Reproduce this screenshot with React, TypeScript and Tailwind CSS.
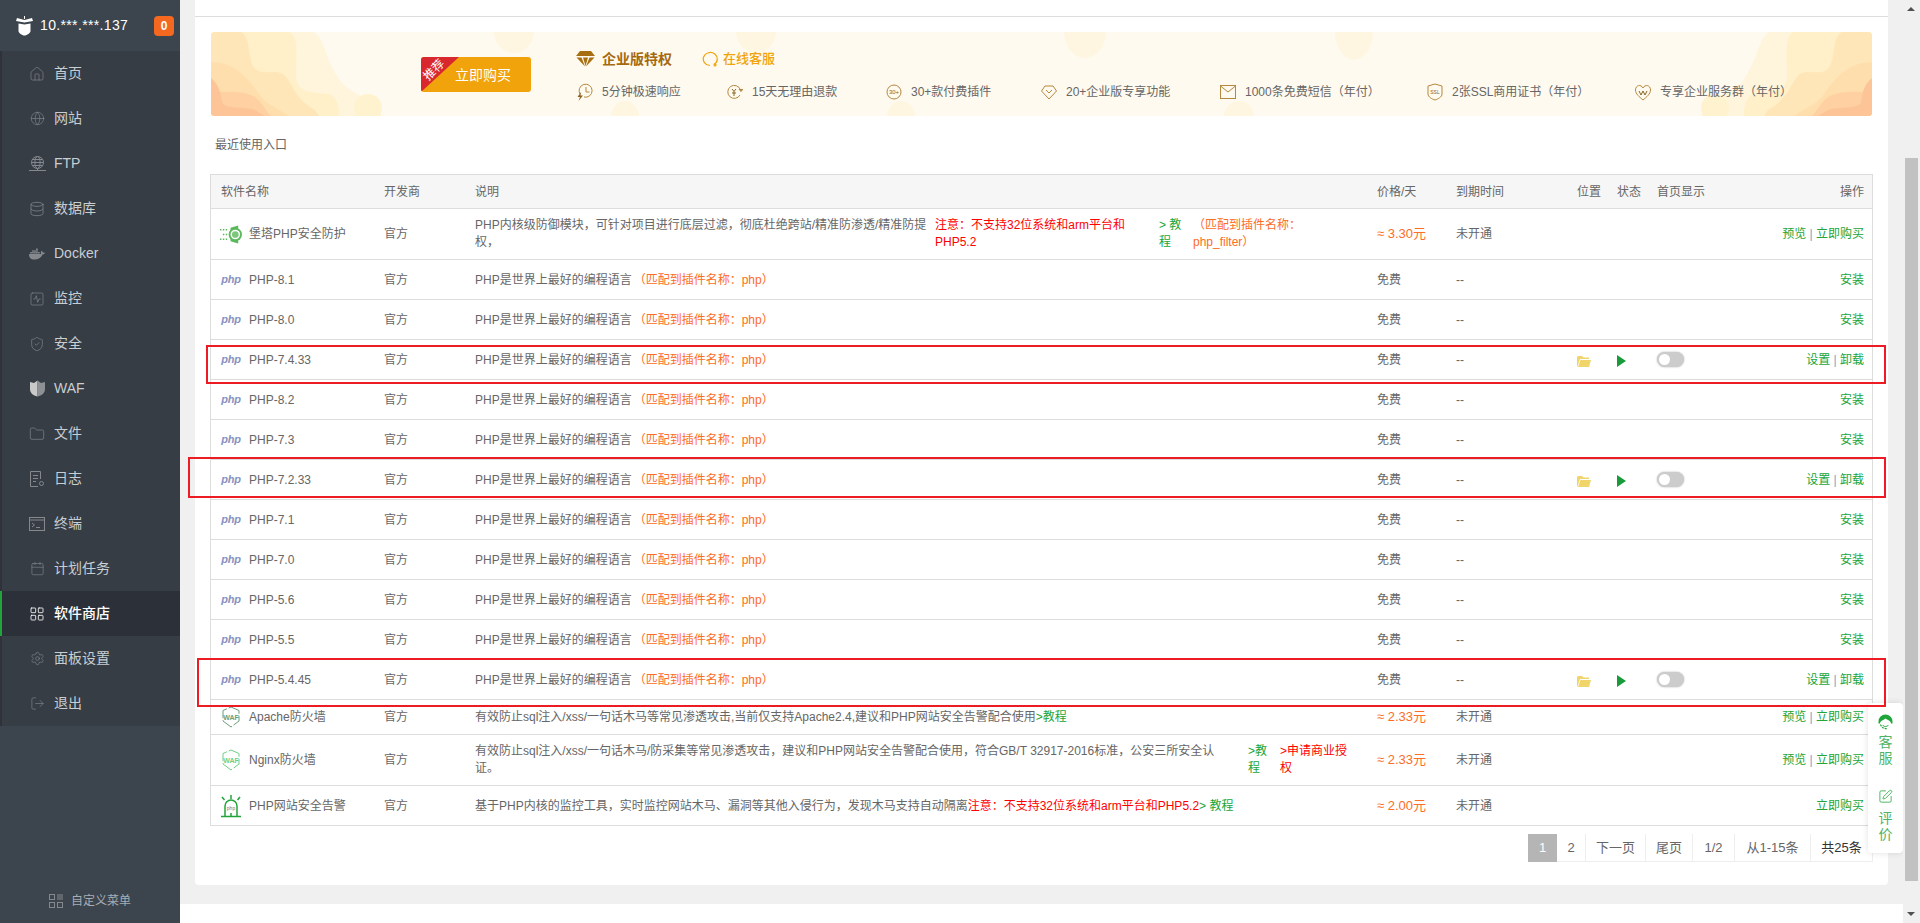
import type { ReactNode } from "react";
import {
  Calendar,
  Database,
  Folder,
  Globe,
  House,
  LayoutGrid,
  LogOut,
  Settings,
  ShieldCheck,
  SquareActivity,
  SquarePen,
} from "lucide-react";
import { FaDocker } from "react-icons/fa";

function LogoIcon() {
  return (
    <svg width="19" height="20" viewBox="0 0 19 20" fill="#fff">
      <path d="M2 2 L9.5 4 L17 2 L18 5 L9.5 6.5 L1 5 Z" />
      <path d="M9 0h1v3H9z" />
      <path d="M3.5 7.5 L9.5 8.5 L15.5 7.5 V15 C15.5 17 12 19.5 9.5 19.5 C7 19.5 3.5 17 3.5 15 Z" />
    </svg>
  );
}

function FtpIcon() {
  return (
    <svg width="17" height="16" viewBox="0 0 17 16" fill="none" stroke="currentColor" strokeWidth="1">
      <circle cx="8.5" cy="6.5" r="6" />
      <ellipse cx="8.5" cy="6.5" rx="2.6" ry="6" />
      <path d="M2.5 6.5h12M3.5 3.5h10M3.5 9.5h10M8.5 12.5v2M0 14.5h17" />
    </svg>
  );
}

function WafNavIcon() {
  return (
    <svg width="15" height="17" viewBox="0 0 15 17">
      <path d="M0 2 L4 3 L7.5 0.5 V16.5 C3 15.5 0 13 0 9 Z" fill="#c9c9c9" />
      <path d="M15 2 L11 3 L7.5 0.5 V16.5 C12 15.5 15 13 15 9 Z" fill="#8d9094" />
    </svg>
  );
}

function LogNavIcon() {
  return (
    <svg width="15" height="16" viewBox="0 0 15 16" fill="none" stroke="currentColor" strokeWidth="1">
      <path d="M10.5 8V0.5H0.5v15H8M3 4.5h5M3 7.5h5M3 10.5h3" />
      <circle cx="11.5" cy="12.5" r="2" />
    </svg>
  );
}

function TerminalNavIcon() {
  return (
    <svg width="16" height="14" viewBox="0 0 16 14" fill="none" stroke="currentColor" strokeWidth="1">
      <rect x="0.5" y="0.5" width="15" height="13" />
      <path d="M0.5 3h15M3 6l2.5 2L3 10M7 10.5h4" />
    </svg>
  );
}

type NavItem = { label: string; icon: ReactNode; active?: boolean };

const NAV_ITEMS: NavItem[] = [
  { label: "首页", icon: <House size={16} strokeWidth={1} /> },
  { label: "网站", icon: <Globe size={15} strokeWidth={1} /> },
  { label: "FTP", icon: <FtpIcon /> },
  { label: "数据库", icon: <Database size={16} strokeWidth={1.1} /> },
  { label: "Docker", icon: <FaDocker size={16} /> },
  { label: "监控", icon: <SquareActivity size={16} strokeWidth={1} /> },
  { label: "安全", icon: <ShieldCheck size={16} strokeWidth={1} /> },
  { label: "WAF", icon: <WafNavIcon /> },
  { label: "文件", icon: <Folder size={16} strokeWidth={1} /> },
  { label: "日志", icon: <LogNavIcon /> },
  { label: "终端", icon: <TerminalNavIcon /> },
  { label: "计划任务", icon: <Calendar size={15} strokeWidth={1} /> },
  { label: "软件商店", icon: <LayoutGrid size={16} strokeWidth={1.25} />, active: true },
  { label: "面板设置", icon: <Settings size={15} strokeWidth={1} /> },
  { label: "退出", icon: <LogOut size={15} strokeWidth={1} /> },
];

function Sidebar() {
  return (
    <aside className="flex w-[180px] shrink-0 flex-col bg-[#3c444d]">
      <div className="flex h-[51px] items-center pl-[15px]">
        <LogoIcon />
        <span className="ml-[6px] w-[114px] text-[14px] tracking-[0.35px] text-white">10.***.***.137</span>
        <span className="flex h-5 w-5 items-center justify-center rounded-[4px] bg-[#f5681f] text-[12px] font-bold text-white">
          0
        </span>
      </div>
      <nav className="border-l-2 border-[#2f3339] bg-[#363d45]">
        {NAV_ITEMS.map((item) => (
          <div
            key={item.label}
            className={`-ml-[2px] flex h-[45px] items-center border-l-2 text-[14px] ${
              item.active
                ? "border-[#20a53a] bg-[#2c3038] font-medium text-white"
                : "border-transparent text-[#c9ced3]"
            }`}
          >
            <span
              className={`flex w-[52px] justify-center pl-[18px] ${
                item.active ? "text-white" : "text-[#85898e]"
              }`}
            >
              {item.icon}
            </span>
            <span>{item.label}</span>
          </div>
        ))}
      </nav>
      <div className="mt-auto flex h-[44px] items-center justify-center gap-2 text-[12px] text-[#a7adb3]">
        <svg width="14" height="14" viewBox="0 0 14 14" fill="none" stroke="#85898e">
          <rect x="0.5" y="0.5" width="5" height="5" />
          <rect x="0.5" y="8.5" width="5" height="5" />
          <rect x="8.5" y="8.5" width="5" height="5" />
          <path d="M8 1h6M8 3h6M8 5h6" />
        </svg>
        <span>自定义菜单</span>
      </div>
    </aside>
  );
}

const WAVE_LAYERS = [
  { fill: "#fff5dc", d: "M0 0H103C115 8 112 24 130 50C140 62 160 66 170 78V84H0Z" },
  { fill: "#fff0c9", d: "M0 0H78C88 4 85 20 85 45C87 62 100 60 118 62C128 66 128 78 128 84H0Z" },
  { fill: "#ffe6b8", d: "M0 0H30C40 6 36 20 42 34C50 46 62 36 72 42C82 50 82 66 104 78L108 84H0Z" },
  { fill: "#ffdeae", d: "M0 30C22 30 36 44 48 62C54 72 70 78 78 84H0Z" },
  { fill: "#ffd0a2", d: "M0 60C14 60 30 58 42 64C50 68 54 78 60 84H0Z" },
  { fill: "#fdc498", d: "M0 46C8 52 10 62 11 70C14 78 34 74 44 78L54 84H0Z" },
];

function BannerWave({ mirrored }: { mirrored?: boolean }) {
  return (
    <svg
      width="180"
      height="84"
      viewBox="0 0 180 84"
      className={`absolute top-0 ${mirrored ? "right-0 -scale-x-100" : "left-0"}`}
    >
      {WAVE_LAYERS.map((layer) => (
        <path key={layer.fill} d={layer.d} fill={layer.fill} />
      ))}
      <circle cx="157" cy="76" r="14" fill="#fff2cf" />
    </svg>
  );
}

function BannerSpots() {
  return (
    <svg width="1661" height="84" viewBox="0 0 1661 84" className="absolute left-0 top-0" fill="#fff6e2">
      <ellipse cx="303" cy="0" rx="20" ry="21" />
      <ellipse cx="545" cy="0" rx="20" ry="21" />
      <ellipse cx="874" cy="0" rx="21" ry="26" />
      <ellipse cx="1143" cy="0" rx="19" ry="28" />
      <ellipse cx="414" cy="84" rx="14" ry="15" />
      <ellipse cx="690" cy="84" rx="14" ry="15" />
      <ellipse cx="1028" cy="84" rx="15" ry="15" />
    </svg>
  );
}

const GOLD = "#b5873f";

function FeatureSvg({ children }: { children: ReactNode }) {
  return (
    <svg width="16" height="18" viewBox="0 0 16 18" fill="none" stroke={GOLD} strokeWidth="1">
      {children}
    </svg>
  );
}

const FEATURES: { text: string; width: string; icon: ReactNode }[] = [
  {
    text: "5分钟极速响应",
    width: "w-[150px]",
    icon: (
      <FeatureSvg>
        <path d="M3 11A6.5 6.5 0 1 1 7 14" />
        <path d="M9 4v5h3.5" />
        <path d="M4 9L0.5 14H3L1.5 18L6 12.5H3.5Z" fill="#8a6420" stroke="none" />
      </FeatureSvg>
    ),
  },
  {
    text: "15天无理由退款",
    width: "w-[159px]",
    icon: (
      <FeatureSvg>
        <path d="M13.5 7A6.5 6.5 0 1 0 13 12" />
        <path d="M12 6l2 2.5L16 6" fill={GOLD} />
        <path d="M5 6l2 2.5L9 6M7 8.5V13M5 10h4" stroke="#8a6420" />
      </FeatureSvg>
    ),
  },
  {
    text: "30+款付费插件",
    width: "w-[155px]",
    icon: (
      <FeatureSvg>
        <circle cx="8" cy="9" r="7" />
        <text x="8" y="11" textAnchor="middle" fontSize="6" fill="#8a6420" stroke="none">
          30+
        </text>
      </FeatureSvg>
    ),
  },
  {
    text: "20+企业版专享功能",
    width: "w-[179px]",
    icon: (
      <FeatureSvg>
        <path d="M4 3h8l3.5 5L8 16 0.5 8Z" />
        <path d="M5 7l3 3 3-3" />
      </FeatureSvg>
    ),
  },
  {
    text: "1000条免费短信（年付）",
    width: "w-[207px]",
    icon: (
      <FeatureSvg>
        <rect x="0.5" y="2.5" width="15" height="13" />
        <path d="M0.5 3l7.5 6 7.5-6" />
      </FeatureSvg>
    ),
  },
  {
    text: "2张SSL商用证书（年付）",
    width: "w-[208px]",
    icon: (
      <FeatureSvg>
        <path d="M8 1l7 2v8c0 3-4 5-7 6-3-1-7-3-7-6V3Z" />
        <text x="8" y="11" textAnchor="middle" fontSize="5" fill="#8a6420" stroke="none">
          SSL
        </text>
      </FeatureSvg>
    ),
  },
  {
    text: "专享企业服务群（年付）",
    width: "w-auto",
    icon: (
      <FeatureSvg>
        <path d="M8 5C6 1 0.5 2 0.5 7c0 4 4 7 7.5 10 3.5-3 7.5-6 7.500-10 0-5-5.500-6-7.500-2Z" />
        <path d="M4 8l2 4 2-4 2 4 2-4" stroke="#8a6420" />
      </FeatureSvg>
    ),
  },
];

function Banner() {
  return (
    <div className="relative mx-4 mt-[15px] h-[84px] overflow-hidden rounded-[4px] bg-[#fffaef]">
      <BannerSpots />
      <BannerWave />
      <BannerWave mirrored />
      <div className="relative flex h-full pl-[210px] pt-[25px]">
        <div className="relative h-[35px] w-[110px] shrink-0 overflow-hidden rounded-[3px] bg-[#f0a30a] pl-[34px] text-[14px] leading-[36px] text-white">
          <div className="absolute left-0 top-0 h-[35px] w-[38px] bg-[#d9272e] [clip-path:polygon(0_0,100%_0,0_100%)]" />
          <span className="absolute left-0 top-[5px] w-[26px] -rotate-45 text-center text-[12px] leading-[16px]">
            推荐
          </span>
          <span className="relative">立即购买</span>
        </div>
        <div className="-mt-[25px] ml-[45px] flex flex-col pt-[16px]">
          <div className="flex h-[22px] items-center">
            <svg width="19" height="16" viewBox="0 0 19 16" fill="#a86f12">
              <path d="M4 0h11l4 5H0Z" />
              <path d="M0.500 6.500h5L9 15.500Z" />
              <path d="M7 6.500h5L9.500 15Z" />
              <path d="M13.500 6.500h5L10 15.500Z" />
            </svg>
            <span className="ml-[7px] text-[14px] font-bold text-[#a5690f]">企业版特权</span>
            <svg width="16" height="16" viewBox="0 0 16 16" fill="none" stroke="#f0a30a" strokeWidth="1.2" className="ml-[30px]">
              <path d="M12 13.500A7 6.500 0 1 0 8 14.500" />
              <circle cx="13" cy="14" r="1" />
            </svg>
            <span className="ml-[5px] text-[13px] font-medium text-[#f0a30a]">在线客服</span>
          </div>
          <div className="ml-[1px] mt-[12px] flex h-[20px] items-center whitespace-nowrap text-[12px] text-[#666]">
            {FEATURES.map((feature) => (
              <div key={feature.text} className={`flex shrink-0 items-center gap-[9px] ${feature.width}`}>
                {feature.icon}
                <span>{feature.text}</span>
              </div>
            ))}
          </div>
        </div>
      </div>
    </div>
  );
}

function PhpLogo() {
  return (
    <span className="w-[22px] text-center text-[11px] font-bold italic leading-none tracking-[-0.3px] text-[#8892bf]">
      php
    </span>
  );
}

function GuardIcon() {
  return (
    <svg width="23" height="19" viewBox="0 0 23 19">
      <path d="M11 2.500L19 0V19L11 16.500Z" fill="#5cb85c" />
      <circle cx="16" cy="9.500" r="7" fill="#5cb85c" />
      <circle cx="16" cy="9.500" r="5" fill="#fff" />
      <circle cx="16" cy="9.500" r="3.500" fill="#7cc77c" />
      <path d="M0 4.500h9M3 9.500h6M0 14.500h9" stroke="#5cb85c" strokeWidth="1.500" strokeDasharray="1.500 1.500" />
    </svg>
  );
}

function WafIcon({ color }: { color: string }) {
  return (
    <svg width="20" height="22" viewBox="0 0 20 22" fill="none" stroke={color} strokeWidth="1">
      <path d="M10 1L18 4.500V15L10 21L2 15V4.500Z" strokeDasharray="12 2" />
      <text x="10" y="13.500" textAnchor="middle" fontSize="7" fontWeight="bold" fill={color} stroke="none">
        WAF
      </text>
    </svg>
  );
}

function AlarmIcon() {
  return (
    <svg width="20" height="24" viewBox="0 0 20 24" fill="none" stroke="#20a53a" strokeWidth="1.500">
      <path d="M4 22V12A6 6 0 0 1 16 12V22M0 22.500H20M10 1V5M1 3L3.500 6M19 3L16.500 6M10 19V22" />
      <text x="10" y="16" textAnchor="middle" fontSize="5" fill="#777" stroke="none">
        php
      </text>
    </svg>
  );
}

const Tail = () => <span className="ml-[2px] text-[#fc6d26]">（匹配到插件名称：php）</span>;

const Green = ({ children }: { children: ReactNode }) => (
  <span className="text-[#20a53a]">{children}</span>
);

const Sep = () => <span className="text-[#6fa8c8]"> | </span>;

type Row = {
  icon: ReactNode;
  name: string;
  desc: ReactNode;
  price: string;
  paid?: boolean;
  expire: string;
  installed?: boolean;
  action: ReactNode;
  height: string;
};

function phpRow(name: string, installed?: boolean): Row {
  return {
    icon: <PhpLogo />,
    name,
    desc: (
      <>
        PHP是世界上最好的编程语言
        <Tail />
      </>
    ),
    price: "免费",
    expire: "--",
    installed,
    height: "h-[40px]",
    action: installed ? (
      <>
        <Green>设置</Green>
        <Sep />
        <Green>卸载</Green>
      </>
    ) : (
      <Green>安装</Green>
    ),
  };
}

const buyAction = (
  <>
    <Green>预览</Green>
    <Sep />
    <Green>立即购买</Green>
  </>
);

const ROWS: Row[] = [
  {
    icon: <GuardIcon />,
    name: "堡塔PHP安全防护",
    desc: (
      <div className="flex leading-[17px]">
        <div className="w-[460px] shrink-0">
          PHP内核级防御模块，可针对项目进行底层过滤，彻底杜绝跨站/精准防渗透/精准防提权，
        </div>
        <div className="w-[224px] shrink-0 pr-[26px] text-[#ff0000]">注意：不支持32位系统和arm平台和PHP5.2</div>
        <div className="w-[34px] shrink-0 pr-[4px] text-[#20a53a]">&gt; 教程</div>
        <div className="w-[112px] shrink-0 text-[#fc6d26]">（匹配到插件名称：php_filter）</div>
      </div>
    ),
    price: "≈ 3.30元",
    paid: true,
    expire: "未开通",
    action: buyAction,
    height: "h-[51px]",
  },
  phpRow("PHP-8.1"),
  phpRow("PHP-8.0"),
  phpRow("PHP-7.4.33", true),
  phpRow("PHP-8.2"),
  phpRow("PHP-7.3"),
  phpRow("PHP-7.2.33", true),
  phpRow("PHP-7.1"),
  phpRow("PHP-7.0"),
  phpRow("PHP-5.6"),
  phpRow("PHP-5.5"),
  phpRow("PHP-5.4.45", true),
  {
    icon: <WafIcon color="#6c9c78" />,
    name: "Apache防火墙",
    desc: (
      <>
        有效防止sql注入/xss/一句话木马等常见渗透攻击,当前仅支持Apache2.4,建议和PHP网站安全告警配合使用
        <Green>&gt;教程</Green>
      </>
    ),
    price: "≈ 2.33元",
    paid: true,
    expire: "未开通",
    action: buyAction,
    height: "h-[35px]",
  },
  {
    icon: <WafIcon color="#6fcf85" />,
    name: "Nginx防火墙",
    desc: (
      <div className="flex leading-[17px]">
        <div className="w-[772px] shrink-0 pr-[20px]">
          有效防止sql注入/xss/一句话木马/防采集等常见渗透攻击，建议和PHP网站安全告警配合使用，符合GB/T 32917-2016标准，公安三所安全认证。
        </div>
        <div className="ml-[1px] w-[32px] shrink-0 pr-[4px] text-[#20a53a]">&gt;教程</div>
        <div className="w-[74px] shrink-0 text-[#ff0000]">&gt;申请商业授权</div>
      </div>
    ),
    price: "≈ 2.33元",
    paid: true,
    expire: "未开通",
    action: buyAction,
    height: "h-[51px]",
  },
  {
    icon: <AlarmIcon />,
    name: "PHP网站安全告警",
    desc: (
      <>
        基于PHP内核的监控工具，实时监控网站木马、漏洞等其他入侵行为，发现木马支持自动隔离
        <span className="text-[#ff0000]">注意：不支持32位系统和arm平台和PHP5.2</span>
        <Green>&gt; 教程</Green>
      </>
    ),
    price: "≈ 2.00元",
    paid: true,
    expire: "未开通",
    action: <Green>立即购买</Green>,
    height: "h-[40px]",
  },
];

const HEAD_CELL = "whitespace-nowrap border-b border-[#ddd] px-[10px] text-left font-normal";
const BODY_CELL = "border-b border-[#ddd] px-[10px]";

function PluginTable() {
  return (
    <div className="mx-[15px] mt-[20px] border-x border-t border-[#ddd]">
      <table className="w-full table-fixed border-separate border-spacing-0 text-[12px] text-[#666]">
        <colgroup>
          <col className="w-[163px]" />
          <col className="w-[91px]" />
          <col className="w-[902px]" />
          <col className="w-[79px]" />
          <col className="w-[121px]" />
          <col className="w-[40px]" />
          <col className="w-[40px]" />
          <col className="w-[73px]" />
          <col />
        </colgroup>
        <thead>
          <tr className="bg-[#f6f6f6]">
            <th className={`${HEAD_CELL} h-[34px]`}>软件名称</th>
            <th className={HEAD_CELL}>开发商</th>
            <th className={HEAD_CELL}>说明</th>
            <th className={HEAD_CELL}>价格/天</th>
            <th className={HEAD_CELL}>到期时间</th>
            <th className={HEAD_CELL}>位置</th>
            <th className={HEAD_CELL}>状态</th>
            <th className={HEAD_CELL}>首页显示</th>
            <th className={`${HEAD_CELL} !pr-[8px] !text-right`}>操作</th>
          </tr>
        </thead>
        <tbody>
          {ROWS.map((row) => (
            <tr key={row.name}>
              <td className={`${BODY_CELL} ${row.height} !pl-[9px] whitespace-nowrap`}>
                <div className="flex items-center gap-[7px]">
                  <span className="flex w-[22px] shrink-0 justify-center">{row.icon}</span>
                  <span>{row.name}</span>
                </div>
              </td>
              <td className={BODY_CELL}>官方</td>
              <td className={`${BODY_CELL} whitespace-normal`}>{row.desc}</td>
              <td className={`${BODY_CELL} ${row.paid ? "text-[13px] text-[#fc6d26]" : ""}`}>{row.price}</td>
              <td className={BODY_CELL}>{row.expire}</td>
              <td className={BODY_CELL}>
                {row.installed && (
                  <svg width="14" height="12" viewBox="0 0 14 12" fill="#f0d56a" className="mt-[2px] overflow-visible">
                    <path d="M1 1h4l1.500 1.500H12V4H3L0.500 11.500H0V2Z" />
                    <path d="M3.500 5H14L12 12H1Z" />
                  </svg>
                )}
              </td>
              <td className={BODY_CELL}>
                {row.installed && (
                  <svg width="9" height="12" viewBox="0 0 9 12" fill="#1a9a3a" className="mt-[2px]">
                    <path d="M0 0L9 6L0 12Z" />
                  </svg>
                )}
              </td>
              <td className={BODY_CELL}>
                {row.installed && (
                  <div className="h-[15px] w-[27px] rounded-full bg-[#ccc] p-[2px] shadow-[0_0_2px_rgba(0,0,0,0.3)]">
                    <div className="h-[11px] w-[11px] rounded-full bg-white" />
                  </div>
                )}
              </td>
              <td className={`${BODY_CELL} !pr-[8px] text-right whitespace-nowrap`}>{row.action}</td>
            </tr>
          ))}
        </tbody>
      </table>
    </div>
  );
}

const PAGES = [
  { label: "2", width: "w-[29px]" },
  { label: "下一页", width: "w-[60px]" },
  { label: "尾页", width: "w-[47px]" },
  { label: "1/2", width: "w-[42px]" },
  { label: "从1-15条", width: "w-[76px]" },
  { label: "共25条", width: "w-[62px]", dark: true },
];

function Pagination() {
  return (
    <div className="mr-[15px] mt-[8px] flex justify-end text-[13px] text-[#666]">
      <span className="flex h-[28px] w-[29px] items-center justify-center bg-[#b5b5b5] text-white">1</span>
      {PAGES.map((page) => (
        <span
          key={page.label}
          className={`flex h-[28px] items-center justify-center border-r border-b border-[#eee] ${page.width} ${
            page.dark ? "text-[#333]" : ""
          }`}
        >
          {page.label}
        </span>
      ))}
    </div>
  );
}

function FloatWidget() {
  return (
    <div className="absolute right-0 top-[703px] flex h-[150px] w-[35px] flex-col items-center rounded-[4px] bg-white text-[14px] leading-[15.500px] text-[#4cb464] shadow-[0_0_6px_rgba(0,0,0,0.12)]">
      <svg width="15" height="16" viewBox="0 0 15 16" className="mt-[11px]" fill="none" stroke="#20a53a">
        <path
          d="M0.500 9.500V7.500A7 7 0 0 1 14.500 7.500V9.500H13C13 7 10.500 6.500 7.500 4.500C5 6.500 2 7 2 9.500Z"
          fill="#20a53a"
          stroke="none"
        />
        <path d="M2.500 10.500C3.500 13.500 6 15 9.500 14.500" strokeWidth="1.200" strokeDasharray="2 1" />
        <path d="M4.500 11C6 13 9 13 10.500 11" strokeWidth="1" />
      </svg>
      <span className="mt-[5px] w-[14px] text-center">客服</span>
      <SquarePen size={15} strokeWidth={1.25} className="mt-[23px] text-[#20a53a]" />
      <span className="mt-[7px] w-[14px] text-center">评价</span>
    </div>
  );
}

function RedBox({ className }: { className: string }) {
  return <div className={`pointer-events-none absolute border-2 border-[#ed1c24] ${className}`} />;
}

export default function App() {
  return (
    <div className="flex h-[923px] overflow-hidden bg-[#f0f0f0] font-['Liberation_Sans','Noto_Sans_CJK_SC',sans-serif]">
      <Sidebar />
      <div className="relative flex min-w-0 flex-1 flex-col">
        <main className="flex-1 px-[15px]">
          <div className="h-[885px] rounded-b-[4px] bg-white">
            <div className="h-[17px] border-b border-[#ddd]" />
            <Banner />
            <div className="ml-[20px] mt-[20px] h-[18px] text-[12px] leading-[18px] text-[#666]">最近使用入口</div>
            <PluginTable />
            <Pagination />
          </div>
        </main>
        <div className="h-[19px] bg-white" />
        <FloatWidget />
        <RedBox className="left-[26px] top-[345px] h-[39px] w-[1680px]" />
        <RedBox className="left-[8px] top-[457px] h-[41px] w-[1698px]" />
        <RedBox className="left-[17px] top-[658px] h-[49px] w-[1689px]" />
      </div>
      <div className="relative w-[17px] shrink-0 bg-[#f0f0f0]">
        <div className="absolute left-[4px] top-[7px] h-0 w-0 border-x-[4px] border-b-[4px] border-x-transparent border-b-[#505050]" />
        <div className="absolute left-[2px] top-[158px] h-[723px] w-[13px] bg-[#c1c1c1]" />
        <div className="absolute bottom-[7px] left-[4px] h-0 w-0 border-x-[4px] border-t-[4px] border-x-transparent border-t-[#505050]" />
      </div>
    </div>
  );
}
